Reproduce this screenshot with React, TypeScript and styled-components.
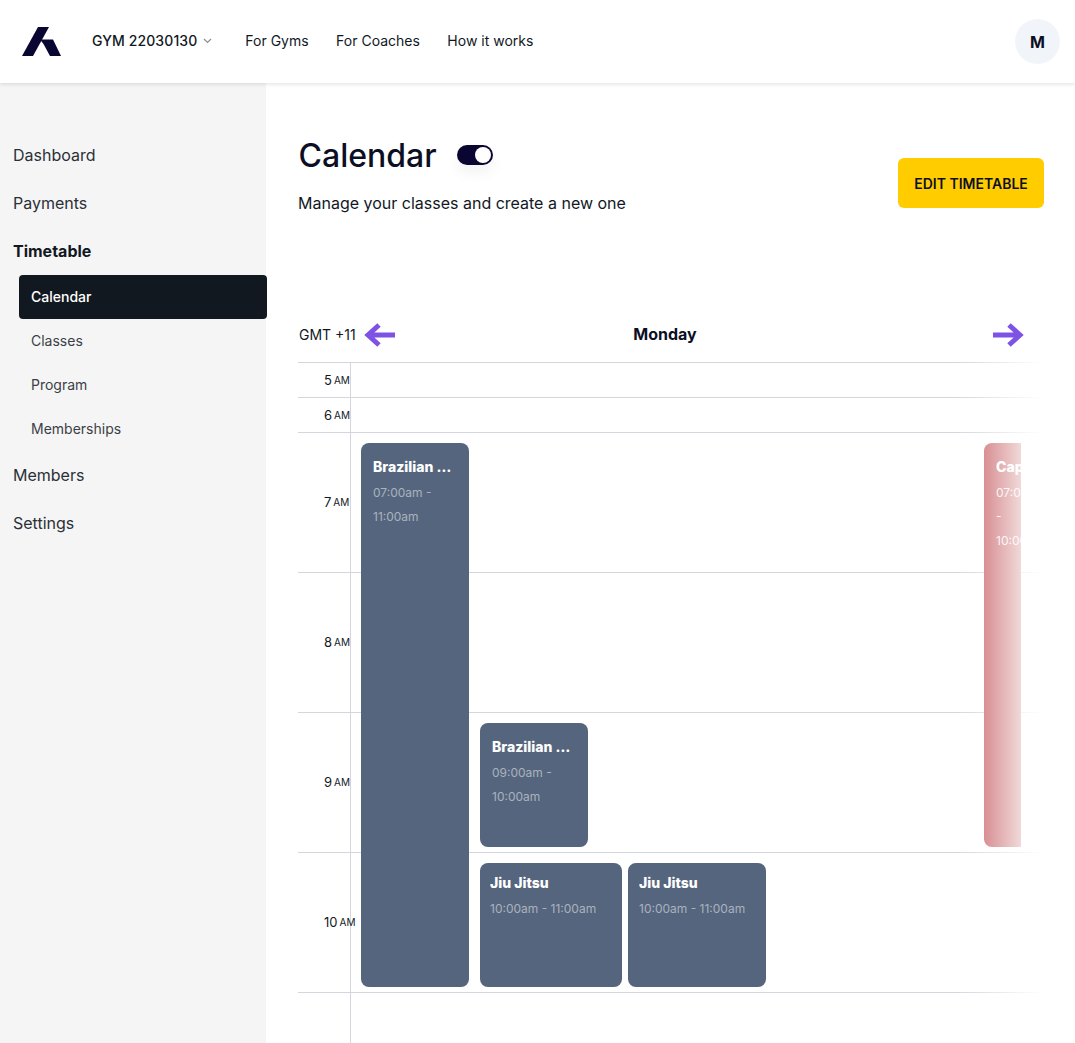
import styled, { createGlobalStyle } from "styled-components";

interface CalendarEvent {
  title: string;
  time: string;
  left: number;
  top: number;
  width: number;
  height: number;
  inset: number;
  topInset: number;
  pink?: boolean;
}

const hours = [
  { hour: "5", height: 35 },
  { hour: "6", height: 35 },
  { hour: "7", height: 140 },
  { hour: "8", height: 140 },
  { hour: "9", height: 140 },
  { hour: "10", height: 140 },
];

// offsets are from the top left of the grid
const events: Array<CalendarEvent> = [
  { title: "Brazilian Jiu Jitsu", time: "07:00am - 11:00am", left: 63, top: 81, width: 108, height: 544, inset: 12, topInset: 13 },
  { title: "Brazilian Jiu Jitsu", time: "09:00am - 10:00am", left: 182, top: 361, width: 108, height: 124, inset: 12, topInset: 13 },
  { title: "Jiu Jitsu", time: "10:00am - 11:00am", left: 182, top: 501, width: 142, height: 124, inset: 10, topInset: 9 },
  { title: "Jiu Jitsu", time: "10:00am - 11:00am", left: 330, top: 501, width: 138, height: 124, inset: 11, topInset: 9 },
  { title: "Capoeira", time: "07:00am - 10:00am", left: 686, top: 81, width: 72, height: 404, inset: 12, topInset: 13, pink: true },
];

const sideItems = ["Classes", "Program", "Memberships"];

const App = () => {
  return (
    <>
      <GlobalStyle />
      <Header>
        <Logo viewBox="0 0 39 29">
          <path d="M16 0H27L11 29H0Z" />
          <path d="M18 12.5H31L39 29H28L21.5 17Z" />
        </Logo>
        <GymName>
          GYM 22030130
          <svg width="9" height="6" viewBox="0 0 9 6" fill="none">
            <path d="M1 1L4.5 4.5L8 1" stroke="#8a8d94" strokeWidth="1.2" />
          </svg>
        </GymName>
        <NavLink>For Gyms</NavLink>
        <NavLink>For Coaches</NavLink>
        <NavLink>How it works</NavLink>
        <Avatar>M</Avatar>
      </Header>
      <Body>
        <Sidebar>
          <SideLink>Dashboard</SideLink>
          <SideLink>Payments</SideLink>
          <SideLink $bold>Timetable</SideLink>
          <SubLink $active>Calendar</SubLink>
          {sideItems.map((item) => (
            <SubLink key={item}>{item}</SubLink>
          ))}
          <SideLink>Members</SideLink>
          <SideLink>Settings</SideLink>
        </Sidebar>
        <Main>
          <TitleRow>
            <div>
              <TitleLine>
                <Title>Calendar</Title>
                <Toggle>
                  <Knob />
                </Toggle>
              </TitleLine>
              <Subtitle>Manage your classes and create a new one</Subtitle>
            </div>
            <EditButton>EDIT TIMETABLE</EditButton>
          </TitleRow>
          <DayBar>
            <Timezone>
              GMT +11
              <Arrow viewBox="0 0 32 24">
                <path d="M31 12H5M15 2L4 12L15 22" />
              </Arrow>
            </Timezone>
            <Day>Monday</Day>
            <NextArrow viewBox="0 0 32 24">
              <path d="M1 12H27M17 2L28 12L17 22" />
            </NextArrow>
          </DayBar>
          <Grid>
            {hours.map((row) => (
              <HourRow key={row.hour} $height={row.height}>
                <HourLabel>
                  {row.hour} <small>AM</small>
                </HourLabel>
              </HourRow>
            ))}
            <GridTail />
            <EventLayer>
              {events.map((event, index) => (
                <EventCard
                  key={index}
                  $left={event.left}
                  $top={event.top}
                  $width={event.width}
                  $height={event.height}
                  $inset={event.inset}
                  $topInset={event.topInset}
                  $pink={event.pink}
                >
                  <EventTitle>{event.title}</EventTitle>
                  <EventTime $pink={event.pink}>{event.time}</EventTime>
                </EventCard>
              ))}
            </EventLayer>
          </Grid>
        </Main>
      </Body>
    </>
  );
};

export default App;

const GlobalStyle = createGlobalStyle`
  html, body {
    margin: 0;
    height: 1043px;
    overflow: hidden;
    background: #fff;
    font-family: Inter, "Liberation Sans", sans-serif;
    color: #12181f;
  }
`;

const Header = styled.header`
  position: relative;
  z-index: 2;
  display: flex;
  align-items: center;
  height: 83px;
  padding: 0 15px 0 22px;
  box-sizing: border-box;
  background: #fff;
  box-shadow: 0 1px 4px rgba(20, 25, 60, 0.14);
`;

const Logo = styled.svg`
  width: 39px;
  height: 29px;
  margin-right: 31px;
  fill: #0a0632;
`;

const GymName = styled.div`
  display: flex;
  align-items: center;
  gap: 6px;
  margin: 0 33px 2px 0;
  font-size: 14px;
  font-weight: 500;
  letter-spacing: 0.1px;
  color: #12181f;
`;

const NavLink = styled.a`
  margin: 0 27.5px 2px 0;
  font-size: 14px;
  color: #12181f;
`;

const Avatar = styled.div`
  display: flex;
  align-items: center;
  justify-content: center;
  width: 45px;
  height: 45px;
  margin-left: auto;
  border-radius: 50%;
  background: #f1f4f9;
  font-size: 16px;
  font-weight: 700;
  color: #0c0f24;
`;

const Body = styled.div`
  display: flex;
  height: 960px;
`;

const Sidebar = styled.nav`
  flex: 0 0 266px;
  min-width: 0;
  padding-top: 48px;
  box-sizing: border-box;
  background: #f5f5f5;
`;

const SideLink = styled.a<{ $bold?: boolean }>`
  display: flex;
  align-items: center;
  height: 48px;
  padding-left: 13px;
  font-size: 16px;
  font-weight: ${(props) => (props.$bold ? 700 : 400)};
  color: ${(props) => (props.$bold ? "#12181f" : "#2b3038")};
`;

const SubLink = styled.a<{ $active?: boolean }>`
  display: flex;
  align-items: center;
  width: 248px;
  height: 44px;
  margin-left: 19px;
  padding: 0 0 2px 12px;
  box-sizing: border-box;
  border-radius: 4px;
  font-size: 14px;
  font-weight: ${(props) => (props.$active ? 500 : 400)};
  color: ${(props) => (props.$active ? "#fff" : "#3a3f47")};
  background: ${(props) => (props.$active ? "#12181f" : "transparent")};
`;

const Main = styled.main`
  flex: 1;
  min-width: 0;
  padding: 48px 31px 0 32px;
`;

const TitleRow = styled.div`
  display: flex;
  justify-content: space-between;
  align-items: flex-start;
  height: 180px;
`;

const TitleLine = styled.div`
  display: flex;
  align-items: center;
  gap: 20.5px;
  height: 48px;
`;

const Title = styled.h1`
  margin: 0 0 0 0.5px;
  font-size: 32px;
  font-weight: 500;
  color: #0c0f24;
`;

const Toggle = styled.div`
  display: flex;
  align-items: center;
  justify-content: flex-end;
  width: 36px;
  height: 20px;
  padding-right: 2px;
  box-sizing: border-box;
  border-radius: 10px;
  background: #0a0632;
  box-shadow: 0 8px 14px rgba(20, 25, 60, 0.05);
`;

const Knob = styled.div`
  width: 16px;
  height: 16px;
  border-radius: 50%;
  background: #fff;
`;

const Subtitle = styled.p`
  margin: 12px 0 0;
  font-size: 16px;
  line-height: 24px;
  color: #12181f;
`;

const EditButton = styled.button`
  width: 146px;
  height: 50px;
  margin-top: 27px;
  padding: 0;
  border: none;
  border-radius: 6px;
  background: #ffcc00;
  font-family: inherit;
  font-size: 14px;
  font-weight: 600;
  color: #0c0f24;
`;

const DayBar = styled.div`
  display: grid;
  grid-template-columns: 1fr auto 1fr;
  align-items: center;
  width: 734px;
  height: 51px;
  padding-bottom: 4px;
  box-sizing: border-box;
`;

const Timezone = styled.div`
  display: flex;
  align-items: center;
  gap: 8px;
  margin-left: 1px;
  font-size: 14px;
  color: #12181f;
`;

const Arrow = styled.svg`
  width: 32px;
  height: 24px;
  fill: none;
  stroke: #7f52e6;
  stroke-width: 5;
`;

const NextArrow = styled(Arrow)`
  justify-self: end;
  margin-right: 8px;
`;

const Day = styled.div`
  margin-bottom: 2px;
  font-size: 16px;
  font-weight: 700;
  color: #0c0f24;
`;

const Grid = styled.div`
  position: relative;
  background: linear-gradient(to right, #d4d5dd 88%, transparent 100%) top / 100% 1px no-repeat;
  width: 746px;
  height: 681px;
  padding-top: 1px;
  box-sizing: border-box;
`;

const HourRow = styled.div<{ $height: number }>`
  height: ${(props) => props.$height}px;
  box-sizing: border-box;
  background: linear-gradient(to right, #d4d5dd 88%, transparent 100%) bottom / 100% 1px no-repeat;
`;

const HourLabel = styled.div`
  display: flex;
  align-items: center;
  gap: 2px;
  width: 53px;
  height: 100%;
  padding: 0 0 2px 26px;
  box-sizing: border-box;
  border-right: 1px solid #d4d5dd;
  font-size: 13px;
  white-space: nowrap;
  color: #12181f;

  small {
    font-size: 10px;
  }
`;

const GridTail = styled.div`
  width: 53px;
  height: 60px;
  box-sizing: border-box;
  border-right: 1px solid #d4d5dd;
`;

// clips the events that run past the right edge of the week
const EventLayer = styled.div`
  position: absolute;
  top: 0;
  left: 0;
  width: 723px;
  height: 100%;
  overflow: hidden;
  pointer-events: none;
`;

const EventCard = styled.div<{
  $left: number;
  $top: number;
  $width: number;
  $height: number;
  $inset: number;
  $topInset: number;
  $pink?: boolean;
}>`
  position: absolute;
  left: ${(props) => props.$left}px;
  top: ${(props) => props.$top}px;
  width: ${(props) => props.$width}px;
  height: ${(props) => props.$height}px;
  padding: ${(props) => props.$topInset}px ${(props) => props.$inset}px;
  box-sizing: border-box;
  border-radius: 8px;
  background: ${(props) =>
    props.$pink ? "linear-gradient(to right, #d88f93 0, #f0d9d9 37px)" : "#54657d"};
`;

const EventTitle = styled.div`
  overflow: hidden;
  font-size: 14px;
  font-weight: 800;
  line-height: 22px;
  white-space: nowrap;
  text-overflow: ellipsis;
  color: #fff;
`;

const EventTime = styled.div<{ $pink?: boolean }>`
  margin-top: 3px;
  font-size: 12px;
  line-height: 24px;
  color: ${(props) => (props.$pink ? "rgba(255, 255, 255, 0.9)" : "rgba(255, 255, 255, 0.5)")};
`;
